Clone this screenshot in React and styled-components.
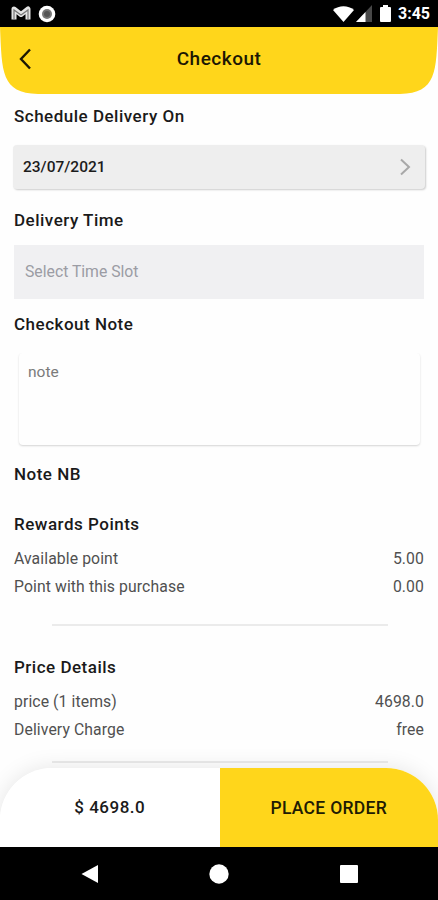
import styled, { createGlobalStyle } from "styled-components";

const GlobalStyle = createGlobalStyle`
  * {
    box-sizing: border-box;
  }

  body {
    margin: 0;
    background: #fff;
    font-family: Roboto, "Liberation Sans", sans-serif;
  }
`;

const Screen = styled.div`
  display: flex;
  flex-direction: column;
  width: 438px;
  height: 900px;
  overflow: hidden;
  background: #fefefe;
`;

const StatusBar = styled.div`
  display: flex;
  flex: none;
  align-items: center;
  justify-content: space-between;
  height: 27px;
  padding: 0 8px 0 11px;
  background: #000;
`;

const StatusGroup = styled.div`
  display: flex;
  align-items: center;
  gap: ${({ $gap }) => $gap}px;
`;

const Clock = styled.span`
  margin-left: -1px;
  color: #fff;
  font-size: 16px;
  font-weight: 700;
  line-height: 29px;
`;

const Header = styled.header`
  display: grid;
  flex: none;
  grid-template-columns: 50px 1fr 50px;
  align-items: center;
  height: 67px;
  padding-bottom: 4px;
  background: #ffd61b;
  clip-path: path("M0 0 H438 C436 45 437 66 400 67 H38 C1 66 2 45 0 0 Z");
`;

const IconButton = styled.button`
  display: flex;
  padding: 0 0 0 18px;
  border: 0;
  background: none;
`;

const Title = styled.h1`
  margin: 0;
  color: #1c1703;
  font-size: 19px;
  font-weight: 500;
  letter-spacing: 0.5px;
  text-align: center;
`;

const Content = styled.main`
  display: flex;
  flex: 1;
  flex-direction: column;
  min-height: 0;
  padding: 10px 14px 0;
`;

const SectionTitle = styled.h2`
  margin: ${({ $top = 0 }) => $top}px 0 0;
  color: #1a1a1a;
  font-size: 17px;
  font-weight: 500;
  line-height: 24px;
  letter-spacing: 0.5px;
`;

const DateField = styled.div`
  display: flex;
  align-items: center;
  justify-content: space-between;
  height: 44px;
  margin: 17px -1px 0;
  padding: 0 14px 0 10px;
  border-radius: 4px;
  background: #eee;
  box-shadow: 1px 1px 2px rgba(0, 0, 0, 0.2);
  color: #1c1c1c;
  font-size: 15.5px;
  font-weight: 500;
`;

const TimeSlot = styled.div`
  height: 54px;
  margin-top: 13px;
  padding-left: 11px;
  background: #f0f0f2;
  color: #9b9ca4;
  font-size: 15.75px;
  line-height: 54px;
`;

const NoteBox = styled.div`
  height: 92px;
  margin: 17px 4px 0 5px;
  padding: 9px 9px;
  border-radius: 4px;
  background: #fefefe;
  box-shadow: 0 1px 2px rgba(0, 0, 0, 0.17);
  clip-path: inset(0 -3px -4px -3px);
  color: #7b7b7b;
  font-size: 15.5px;
  line-height: 20px;
`;

const Rows = styled.div`
  margin-top: 9px;
`;

const Row = styled.div`
  display: flex;
  justify-content: space-between;
  color: #505050;
  font-size: 15.75px;
  font-weight: 400;
  line-height: 28px;
  letter-spacing: 0.1px;
`;

const Divider = styled.div`
  flex: none;
  height: 2px;
  margin: ${({ $top }) => $top}px 36px 0 38px;
  background: #ebebeb;
`;

const BottomShadow = styled.div`
  flex: none;
  position: relative;
  border-radius: 52px 52px 0 0;
  box-shadow: 0 0 22px rgba(0, 0, 0, 0.1);
`;

const BottomBar = styled.footer`
  display: flex;
  height: 79px;
  border-radius: 52px 52px 0 0;
  overflow: hidden;
  background: #fff;
`;

const Total = styled.div`
  flex: 1;
  color: #1a1a1a;
  font-size: 17px;
  font-weight: 500;
  line-height: 79px;
  letter-spacing: 0.5px;
  text-align: center;
`;

const PlaceOrder = styled.button`
  width: 218.5px;
  padding: 1px 0 0;
  border: 0;
  background: #ffd61b;
  color: #211b03;
  font-family: inherit;
  font-size: 17.5px;
  font-weight: 500;
  line-height: 78px;
  letter-spacing: 0.3px;
  text-align: center;
`;

const NavBar = styled.nav`
  display: flex;
  flex: none;
  position: relative;
  align-items: center;
  justify-content: space-between;
  height: 53px;
  padding: 0 80px;
  background: #000;
`;

function MailIcon() {
  return (
    <svg width="20" height="16" viewBox="0 0 20 16" fill="none">
      <path d="M3 13.5V3L10 8.500l7-5.500v10.500" stroke="#e4e4e4" strokeWidth="5" strokeLinejoin="round" />
      <path d="M3 13V4L10 9l7-5v9" stroke="#777" strokeWidth="1.200" />
    </svg>
  );
}

function RecordIcon() {
  return (
    <svg width="18" height="18" viewBox="0 0 18 18">
      <circle cx="9" cy="9" r="8.300" fill="#fff" />
      <circle cx="9" cy="9" r="5" fill="#777" />
      <circle cx="9" cy="9" r="3" fill="#555" />
    </svg>
  );
}

function WifiIcon() {
  return (
    <svg width="21" height="16" viewBox="0 0 21 16">
      <path d="M0 4C6 -1 15 -1 21 4L10.500 16Z" fill="#fff" />
    </svg>
  );
}

function SignalIcon() {
  return (
    <svg width="16" height="17" viewBox="0 0 16 17">
      <path d="M16 0V17H0Z" fill="#484848" />
      <path d="M9.500 7V17H0Z" fill="#fff" />
    </svg>
  );
}

function BatteryIcon() {
  return (
    <svg width="11" height="17" viewBox="0 0 11 17">
      <path d="M3 0h5v2h2q1 0 1 1v13q0 1-1 1H1q-1 0-1-1V3q0-1 1-1h2Z" fill="#fff" />
    </svg>
  );
}

const rewards = [
  { label: "Available point", value: "5.00" },
  { label: "Point with this purchase", value: "0.00" },
];

const prices = [
  { label: "price (1 items)", value: "4698.0" },
  { label: "Delivery Charge", value: "free" },
];

function DetailRows({ items }) {
  return (
    <Rows>
      {items.map(({ label, value }) => (
        <Row key={label}>
          <span>{label}</span>
          <span>{value}</span>
        </Row>
      ))}
    </Rows>
  );
}

export default function App() {
  return (
    <>
      <GlobalStyle />
      <Screen>
        <StatusBar>
          <StatusGroup $gap={7}>
            <MailIcon />
            <RecordIcon />
          </StatusGroup>
          <StatusGroup $gap={8}>
            <StatusGroup $gap={2}>
              <WifiIcon />
              <SignalIcon />
            </StatusGroup>
            <BatteryIcon />
            <Clock>3:45</Clock>
          </StatusGroup>
        </StatusBar>

        <Header>
          <IconButton aria-label="Back">
            <svg width="14" height="22" viewBox="0 0 14 22" fill="none">
              <path d="M12 1.500L3 11l9 9.500" stroke="#1c1703" strokeWidth="2.400" />
            </svg>
          </IconButton>
          <Title>Checkout</Title>
        </Header>

        <Content>
          <SectionTitle>Schedule Delivery On</SectionTitle>
          <DateField>
            <span>23/07/2021</span>
            <svg width="12" height="18" viewBox="0 0 12 18" fill="none">
              <path d="M2 1.500L10 9l-8 7.500" stroke="#a8a8a8" strokeWidth="2" />
            </svg>
          </DateField>

          <SectionTitle $top={19}>Delivery Time</SectionTitle>
          <TimeSlot>Select Time Slot</TimeSlot>

          <SectionTitle $top={13}>Checkout Note</SectionTitle>
          <NoteBox>note</NoteBox>

          <SectionTitle $top={17}>Note NB</SectionTitle>

          <SectionTitle $top={26}>Rewards Points</SectionTitle>
          <DetailRows items={rewards} />
          <Divider $top={23} />

          <SectionTitle $top={29}>Price Details</SectionTitle>
          <DetailRows items={prices} />
          <Divider $top={17} />
        </Content>

        <BottomShadow>
          <BottomBar>
            <Total>$ 4698.0</Total>
            <PlaceOrder>PLACE ORDER</PlaceOrder>
          </BottomBar>
        </BottomShadow>

        <NavBar>
          <svg width="18" height="20" viewBox="0 0 18 20">
            <path d="M18 1v18L1.500 10Z" fill="#fff" />
          </svg>
          <svg width="20" height="20" viewBox="0 0 20 20">
            <circle cx="10" cy="10" r="9.700" fill="#fff" />
          </svg>
          <svg width="18" height="18" viewBox="0 0 18 18">
            <rect width="18" height="18" rx="1" fill="#fff" />
          </svg>
        </NavBar>
      </Screen>
    </>
  );
}
